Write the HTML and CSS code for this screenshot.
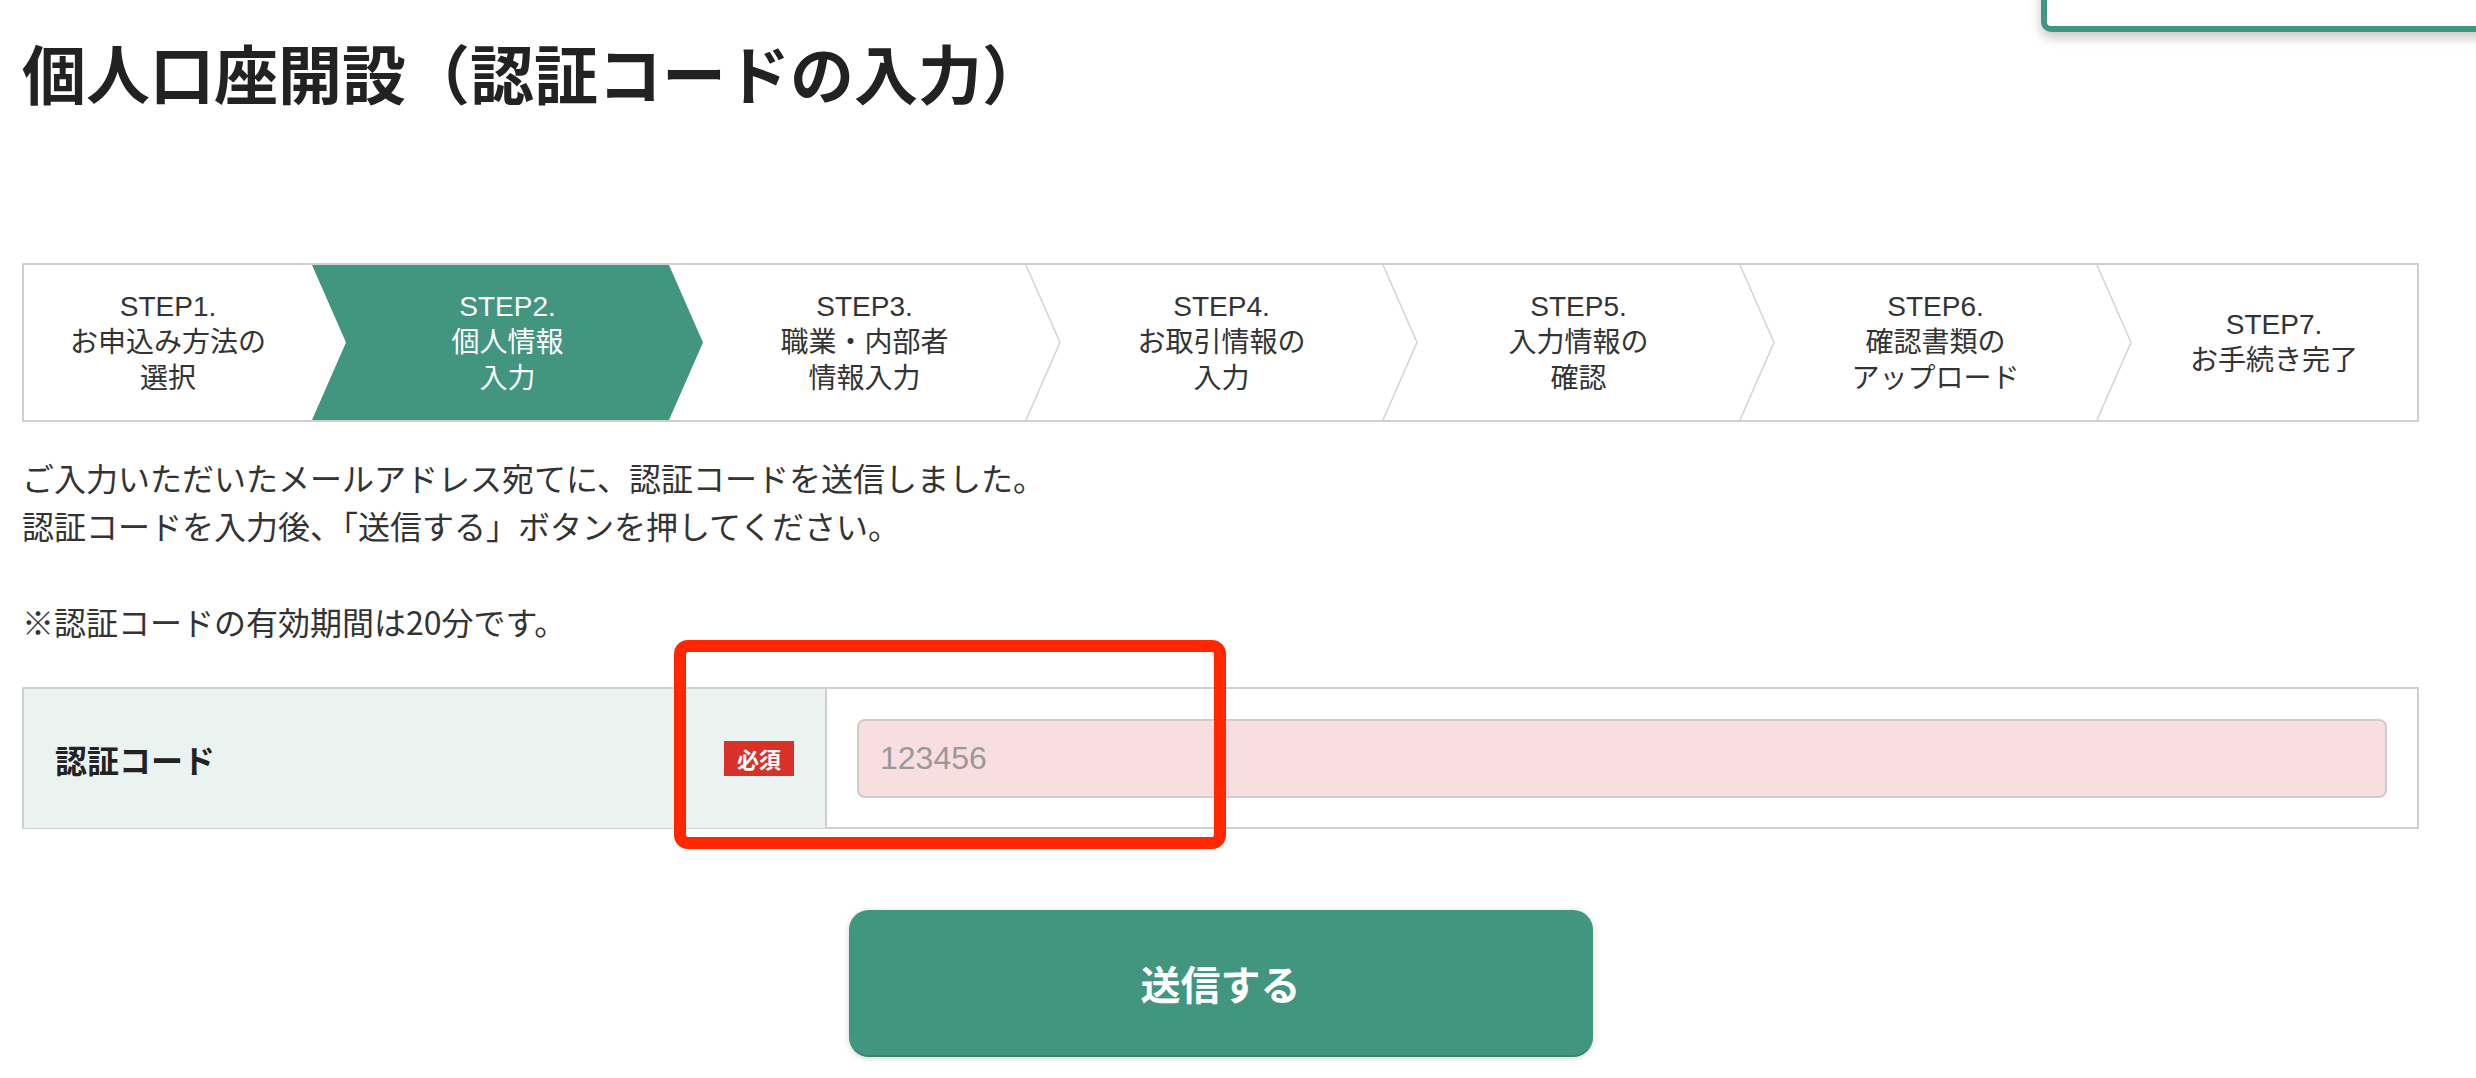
FILE: index.html
```html
<!DOCTYPE html>
<html lang="ja">
<head>
<meta charset="utf-8">
<title>個人口座開設（認証コードの入力）</title>
<link rel="stylesheet" href="styles.css">
</head>
<body>
<div class="page">
  <div class="float-panel"></div>
  <h1 class="title">個人口座開設（認証コードの入力）</h1>

  <ol class="steps">
    <li class="step step-first">STEP1.<br>お申込み方法の<br>選択</li>
    <li class="step active">STEP2.<br>個人情報<br>入力</li>
    <li class="step">STEP3.<br>職業・内部者<br>情報入力<svg class="sep" viewBox="0 0 34 155" preserveAspectRatio="none"><polyline points="0,0 34,77.5 0,155" /></svg></li>
    <li class="step">STEP4.<br>お取引情報の<br>入力<svg class="sep" viewBox="0 0 34 155" preserveAspectRatio="none"><polyline points="0,0 34,77.5 0,155" /></svg></li>
    <li class="step">STEP5.<br>入力情報の<br>確認<svg class="sep" viewBox="0 0 34 155" preserveAspectRatio="none"><polyline points="0,0 34,77.5 0,155" /></svg></li>
    <li class="step">STEP6.<br>確認書類の<br>アップロード<svg class="sep" viewBox="0 0 34 155" preserveAspectRatio="none"><polyline points="0,0 34,77.5 0,155" /></svg></li>
    <li class="step step-last">STEP7.<br>お手続き完了</li>
  </ol>

  <p class="lead">ご入力いただいたメールアドレス宛てに、認証コードを送信しました。<br>認証コードを入力後、「送信する」ボタンを押してください。<br><br>※認証コードの有効期間は20分です。</p>

  <div class="form-table">
    <div class="form-head">
      <span class="form-label">認証コード</span>
      <span class="badge">必須</span>
    </div>
    <div class="form-body">
      <input class="code-input" type="text" placeholder="123456">
    </div>
  </div>

  <div class="actions">
    <button class="submit" type="button">送信する</button>
  </div>

  <div class="annotation"></div>
</div>
</body>
</html>
```

FILE: styles.css
```css
* { box-sizing: border-box; }

html, body {
  margin: 0;
  padding: 0;
  background: #fff;
}

body {
  font-family: "Liberation Sans", "Noto Sans CJK JP", sans-serif;
  color: #333;
  overflow: hidden;
}

.page {
  position: relative;
  padding: 0 57px 0 22px;
  min-height: 1078px;
}

.float-panel {
  position: absolute;
  top: -60px;
  left: 2041px;
  width: 520px;
  height: 92px;
  border: 6px solid #42957f;
  border-radius: 10px;
  background: #fff;
  box-shadow: 0 6px 12px rgba(0, 0, 0, 0.22);
}

.title {
  margin: 0;
  padding-top: 23px;
  font-family: "Noto Sans CJK JP", sans-serif;
  font-size: 64px;
  line-height: 96px;
  font-weight: 700;
  color: #222;
}

.steps {
  list-style: none;
  margin: 144px 0 0;
  padding: 0;
  display: flex;
  height: 159px;
  border: 2px solid #cfcfcf;
}

.step {
  position: relative;
  flex: 0 0 391px;
  margin-right: -34px;
  display: flex;
  align-items: center;
  justify-content: center;
  text-align: center;
  font-size: 28px;
  line-height: 36px;
  color: #333;
}

.step-first {
  flex-basis: 322px;
  padding-right: 34px;
}

.step-last {
  flex: 1 1 auto;
  margin-right: 0;
  padding-left: 34px;
}

.step.active {
  background: #42957f;
  color: #fff;
  clip-path: polygon(0 0, calc(100% - 34px) 0, 100% 50%, calc(100% - 34px) 100%, 0 100%, 34px 50%);
  z-index: 1;
}

.sep {
  position: absolute;
  top: 0;
  right: 0;
  width: 34px;
  height: 100%;
  overflow: visible;
}

.sep polyline {
  fill: none;
  stroke: #d2d2d2;
  stroke-width: 1.5;
  vector-effect: non-scaling-stroke;
}

.lead {
  margin: 31px 0 0;
  font-family: "Noto Sans CJK JP", sans-serif;
  font-size: 32px;
  line-height: 48px;
  color: #333;
}

.form-table {
  margin-top: 42px;
  display: grid;
  grid-template-columns: 803px 1fr;
  border: 2px solid #cfcfcf;
  height: 142px;
}

.form-head {
  background: #eaf3f0;
  border-right: 2px solid #cfcfcf;
  display: flex;
  align-items: center;
  justify-content: space-between;
  padding: 0 31px 0 31px;
}

.form-label {
  font-family: "Noto Sans CJK JP", sans-serif;
  font-size: 32px;
  font-weight: 700;
  color: #222;
}

.badge {
  display: inline-block;
  height: 35px;
  line-height: 35px;
  padding: 0 13px;
  background: #d9302a;
  color: #fff;
  font-family: "Noto Sans CJK JP", sans-serif;
  font-size: 22px;
  font-weight: 700;
}

.form-body {
  padding: 30px;
  display: flex;
  align-items: center;
}

.code-input {
  width: 100%;
  height: 79px;
  border: 2px solid #cdcdcd;
  border-radius: 8px;
  background: #f9dedf;
  padding: 0 21px;
  font-family: "Liberation Sans", sans-serif;
  font-size: 32px;
  color: #333;
  outline: none;
}

.code-input::placeholder {
  color: #999;
}

.actions {
  margin-top: 81px;
  display: flex;
  justify-content: center;
}

.submit {
  width: 744px;
  height: 147px;
  border: none;
  border-bottom: 2px solid #3a8472;
  border-radius: 20px;
  background: #42957f;
  color: #fff;
  font-family: "Noto Sans CJK JP", sans-serif;
  font-size: 40px;
  font-weight: 700;
  box-shadow: 0 1px 6px rgba(0, 0, 0, 0.18);
  cursor: pointer;
}

.annotation {
  position: absolute;
  left: 674px;
  top: 640px;
  width: 552px;
  height: 209px;
  border: 12px solid #ff2600;
  border-radius: 14px;
  pointer-events: none;
}
```
